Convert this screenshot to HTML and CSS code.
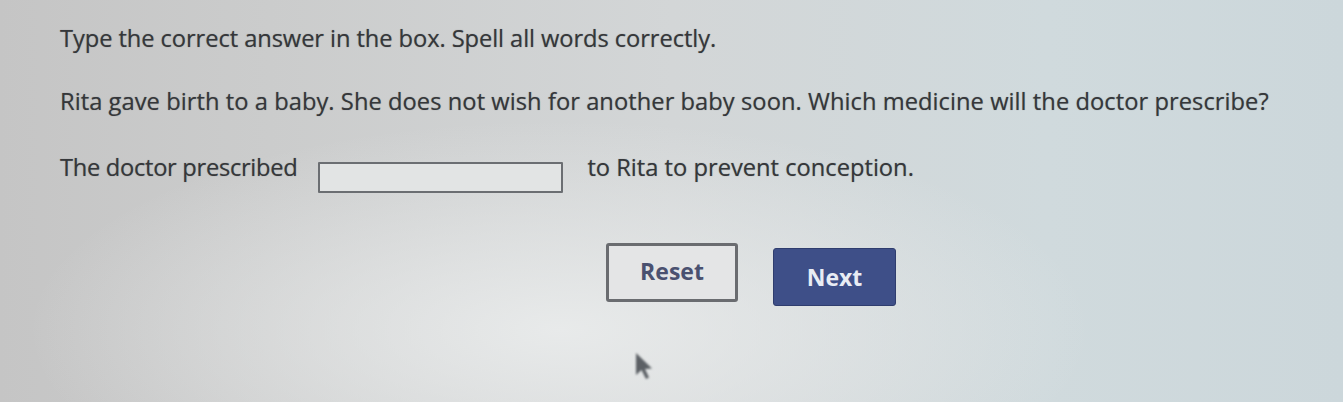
FILE: index.html
```html
<!DOCTYPE html>
<html lang="en">
<head>
<meta charset="utf-8">
<title>Question</title>
<link rel="stylesheet" href="styles.css">
</head>
<body>
<main class="screen">
  <p class="instruction">Type the correct answer in the box. Spell all words correctly.</p>
  <p class="question">Rita gave birth to a baby. She does not wish for another baby soon. Which medicine will the doctor prescribe?</p>
  <p class="fill">
    <span class="lead">The doctor prescribed</span>
    <span class="answer-box"></span>
    <span>to Rita to prevent conception.</span>
  </p>
  <div class="actions">
    <button class="btn btn-reset" type="button">Reset</button>
    <button class="btn btn-next" type="button">Next</button>
  </div>
  <svg class="cursor" width="26" height="32" viewBox="0 0 26 32" aria-hidden="true">
    <path d="M3 2 L3 24 L8.5 19 L13 28 L16 26.5 L12 18 L19 17.5 Z" fill="#3a3f45" opacity="0.8"/>
  </svg>
</main>
</body>
</html>
```

FILE: styles.css
```css
html, body {
  margin: 0;
  padding: 0;
}

body {
  width: 1343px;
  height: 402px;
  overflow: hidden;
  font-family: "Open Sans", "Liberation Sans", sans-serif;
  color: #35373a;
  background:
    radial-gradient(ellipse 760px 300px at 560px 330px, rgba(236,238,238,0.85), rgba(236,238,238,0) 70%),
    linear-gradient(90deg, #c5c5c5 0%, #cbcccc 20%, #d3d6d7 50%, #d0dadd 78%, #ccd7db 100%);
}

.screen {
  position: relative;
  height: 402px;
  box-sizing: border-box;
  padding: 24px 0 0 60px;
}

.instruction,
.question,
.fill {
  margin: 0;
  font-size: 23.7px;
  line-height: 28px;
  text-shadow: 0 0 1px rgba(40, 42, 46, 0.45);
}

.instruction {
  letter-spacing: -0.08px;
}

.question {
  margin-top: 35px;
  letter-spacing: 0.05px;
}

.fill {
  margin-top: 38px;
  display: flex;
  align-items: flex-start;
}

.lead {
  letter-spacing: -0.3px;
}

.answer-box {
  display: inline-block;
  width: 241px;
  height: 27px;
  margin: 9px 24px 0 21px;
  border: 2px solid #6b6e72;
  border-radius: 1px;
  background: #e2e4e4;
}

.actions {
  display: flex;
  align-items: flex-start;
  gap: 35px;
  margin: 50px 0 0 546px;
}

.btn {
  font-family: "Open Sans", "Liberation Sans", sans-serif;
  font-size: 23px;
  font-weight: 700;
  border-radius: 3px;
  cursor: pointer;
}

.btn-reset {
  width: 132px;
  height: 59px;
  padding: 0 0 4px;
  background: #e4e5e6;
  color: #4a5170;
  border: 3px solid #6a6c70;
}

.btn-next {
  width: 123px;
  height: 58px;
  margin-top: 5px;
  padding: 0;
  background: #3e4f88;
  color: #e8ecf4;
  border: 1px solid #2f3d6e;
}

.cursor {
  position: absolute;
  left: 633px;
  top: 351px;
  filter: blur(1.2px);
}
```
